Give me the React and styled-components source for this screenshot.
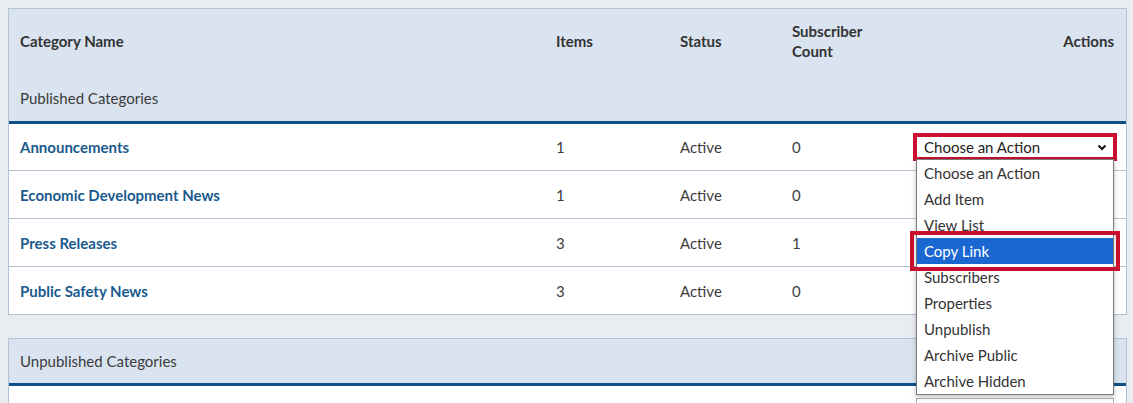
import React from 'react';
import styled, { createGlobalStyle } from 'styled-components';

const GlobalStyle = createGlobalStyle`
  body {
    margin: 0;
    background: #e9edf2;
    font-family: Lato, "Open Sans", sans-serif;
    color: #333;
  }
`;

const Page = styled.div`
  padding: 8px 6px 0 8px;
  display: flex;
  flex-direction: column;
  gap: 23px;
`;

const Panel = styled.div`
  border: 1px solid #b2c3d7;
  background: #fff;
`;

const HeadArea = styled.div`
  background: #dae4f0;
  border-bottom: 3px solid #0d5088;
`;

const Grid = styled.div`
  display: grid;
  grid-template-columns: 536px 124px 112px 1fr 198px;
  align-items: center;
  padding: 0 12px 0 11px;
`;

const TitleRow = styled(Grid)`
  padding-top: 12px;
  padding-bottom: 12px;
  font-size: 15px;
  font-weight: 700;
  line-height: 20px;
  color: #333;
`;

const Caption = styled.div`
  padding: ${p => (p.$top ? '15px 11px 13px' : '12px 11px 12px')};
  font-size: 15px;
  line-height: 20px;
  color: #3b3b3b;
`;

const ActionsHead = styled.div`
  text-align: right;
`;

const Row = styled(Grid)`
  height: 47px;
  font-size: 15px;
  color: #3d3d3d;
  ${HeadArea} + & {
    height: 46px;
  }
  & + & {
    border-top: 1px solid #b2c3d7;
  }
`;

const Name = styled.a`
  font-weight: 700;
  color: #1a5a8e;
  text-decoration: none;
`;

const SelectWrap = styled.div`
  position: relative;
  width: 198px;
`;

const SelectBox = styled.div`
  height: 22px;
  box-sizing: border-box;
  border: 1px solid ${p => (p.$marked ? '#c8102e' : '#aab6c4')};
  outline: ${p => (p.$marked ? '3px solid #c8102e' : 'none')};
  background: #fff;
  display: flex;
  align-items: center;
  justify-content: space-between;
  padding: 0 6px 0 7px;
  font-size: 15px;
  color: #222;
`;

const Menu = styled.ul`
  position: absolute;
  top: 23px;
  left: 0;
  width: 198px;
  box-sizing: border-box;
  margin: 0;
  padding: 0;
  list-style: none;
  background: #fff;
  border: 1px solid #7b7b7b;
  box-shadow: 0 2px 5px rgba(0, 0, 0, 0.25);
  z-index: 5;
`;

const Option = styled.li`
  height: 26px;
  line-height: 26px;
  padding: 0 7px;
  font-size: 15px;
  color: ${p => (p.$active ? '#fff' : '#333')};
  background: ${p => (p.$active ? '#1b67d2' : 'transparent')};
  outline: ${p => (p.$active ? '4px solid #c8102e' : 'none')};
  outline-offset: 3px;
`;

const options = [
  'Choose an Action',
  'Add Item',
  'View List',
  'Copy Link',
  'Subscribers',
  'Properties',
  'Unpublish',
  'Archive Public',
  'Archive Hidden',
];

const published = [
  { name: 'Announcements', items: 1, status: 'Active', subs: 0 },
  { name: 'Economic Development News', items: 1, status: 'Active', subs: 0 },
  { name: 'Press Releases', items: 3, status: 'Active', subs: 1 },
  { name: 'Public Safety News', items: 3, status: 'Active', subs: 0 },
];

const Chevron = () => (
  <svg width="10" height="7" viewBox="0 0 10 7">
    <polyline points="1.5,1.5 5,5 8.5,1.5" fill="none" stroke="#111" strokeWidth="2" />
  </svg>
);

const ActionSelect = ({ open }) => (
  <SelectWrap>
    <SelectBox $marked={open}>
      <span>Choose an Action</span>
      <Chevron />
    </SelectBox>
    {open && (
      <Menu>
        {options.map(o => (
          <Option key={o} $active={o === 'Copy Link'}>{o}</Option>
        ))}
      </Menu>
    )}
  </SelectWrap>
);

const App = () => (
  <Page>
    <GlobalStyle />
    <Panel>
      <HeadArea>
        <TitleRow>
          <div>Category Name</div>
          <div>Items</div>
          <div>Status</div>
          <div>Subscriber<br />Count</div>
          <ActionsHead>Actions</ActionsHead>
        </TitleRow>
        <Caption $top>Published Categories</Caption>
      </HeadArea>
      {published.map((c, i) => (
        <Row key={c.name}>
          <Name href="#">{c.name}</Name>
          <div>{c.items}</div>
          <div>{c.status}</div>
          <div>{c.subs}</div>
          {i === 0 ? <ActionSelect open /> : <div />}
        </Row>
      ))}
    </Panel>
    <Panel>
      <HeadArea>
        <Caption>Unpublished Categories</Caption>
      </HeadArea>
      <Row>
        <Name href="#">Allegany County News</Name>
        <div>0</div>
        <div>Draft</div>
        <div>0</div>
        <ActionSelect />
      </Row>
    </Panel>
  </Page>
);

export default App;
